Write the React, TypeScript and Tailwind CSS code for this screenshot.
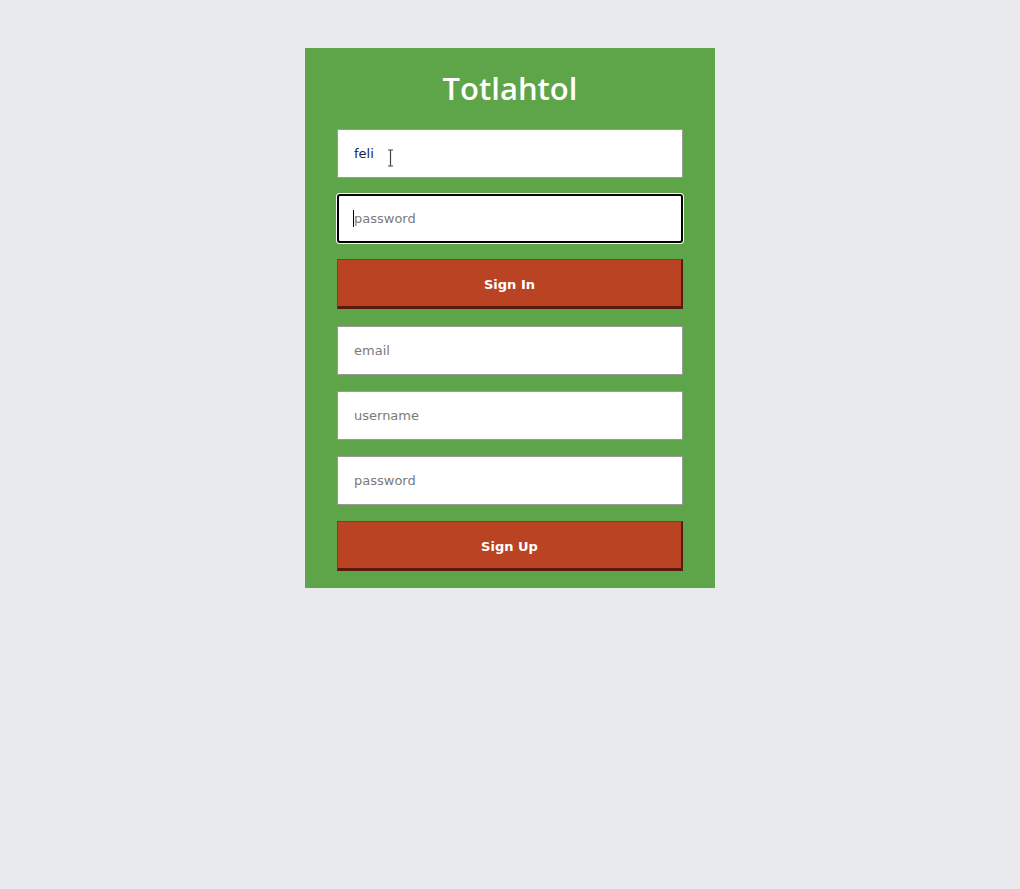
import { useState } from 'react'

const inputClass =
  'block h-[49px] w-full border border-[#9a9a9a] bg-white px-4 text-[13px] text-[#0b1f4a] placeholder:text-[#7a7a7a] outline-none'

const buttonClass =
  'block h-[50px] w-full border border-[#a5301a] border-r-2 border-b-[3px] border-r-[#5b1a0d] border-b-[#5b1a0d] bg-[#b94322] pt-[3px] text-[13px] font-bold text-white [font-family:"DejaVu_Sans",sans-serif]'

const App = () => {
  const [username, setUsername] = useState('feli')

  return (
    <div className="min-h-[889px] w-full bg-[#e9eaee] pt-12 [font-family:'DejaVu_Sans',sans-serif]">
      <div className="mx-auto w-[410px] bg-[#5ea448] px-8 pb-4">
        <h1 className="pt-[18px] pb-[19px] text-center text-[31px] leading-[44px] font-semibold text-white [font-family:'Open_Sans',sans-serif]">
          Totlahtol
        </h1>

        <div className="flex flex-col gap-4">
          <div className="relative">
            <input
              className={inputClass}
              value={username}
              onChange={(event) => setUsername(event.target.value)}
              placeholder="username"
            />
            {/* mouse cursor over the field */}
            <svg className="pointer-events-none absolute top-[20px] left-[50px]" width="7" height="18" viewBox="0 0 7 18">
              <path d="M1 1h5M3.5 1v16M1 17h5" stroke="#444" strokeWidth="1.2" fill="none" />
            </svg>
          </div>

          <div className="relative">
            <input
              type="password"
              className="block h-[49px] w-full rounded-[3px] border-2 border-black bg-white px-[15px] text-[13px] text-[#0b1f4a] placeholder:text-[#7a7a7a] outline-none ring-1 ring-white"
              placeholder="password"
            />
            <span className="pointer-events-none absolute top-[16px] left-[16px] h-[17px] w-px bg-black" />
          </div>

          <button className={buttonClass + ' mb-px'}>Sign In</button>

          <input className={inputClass} placeholder="email" />
          <input className={inputClass} placeholder="username" />
          <input type="password" className={inputClass} placeholder="password" />

          <button className={buttonClass + ' mb-px'}>Sign Up</button>
        </div>
      </div>
    </div>
  )
}

export default App
